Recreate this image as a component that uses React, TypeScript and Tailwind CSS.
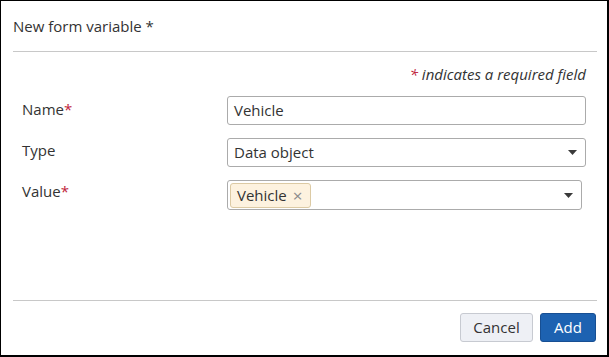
import React from "react";

// Triangulito del desplegable
const Caret = () => (
    <svg width="9" height="5" viewBox="0 0 9 5" className="shrink-0">
        <path d="M0 0 L9 0 L4.5 5 Z" fill="#3a3a3a" />
    </svg>
);

const Req = () => <span className="text-[#c0223b]">*</span>;

const App: React.FC = () => {
    return (
        <div className="w-[609px] h-[357px] bg-white border-black border-t border-l border-r-2 border-b-2 flex flex-col pl-3 pr-[10px] font-['Open_Sans',sans-serif] text-[15px] text-[#333333]">
            {/* Cabecera */}
            <div className="h-[51px] shrink-0 flex items-center border-b border-[#c8c8c8]">
                <span>New form variable *</span>
            </div>

            {/* Cuerpo del formulario */}
            <div className="flex-1 pt-3 pl-[9px] pr-[11px]">
                <p className="text-right italic leading-[20px]">
                    <Req /> indicates a required field
                </p>

                <div className="mt-3 flex flex-col gap-[13px]">
                    {/* Nombre */}
                    <div className="flex items-start">
                        <label className="w-[205px] pt-[3px] leading-[20px]">
                            Name<Req />
                        </label>
                        <div className="flex-1 h-[29px] border border-[#ababab] rounded-[3px] flex items-center px-[6px]">
                            Vehicle
                        </div>
                    </div>

                    {/* Tipo */}
                    <div className="flex items-start">
                        <label className="w-[205px] pt-[2px] leading-[20px]">Type</label>
                        <div className="flex-1 h-[29px] border border-[#ababab] rounded-[3px] flex items-center justify-between pl-[6px] pr-[8px]">
                            <span>Data object</span>
                            <Caret />
                        </div>
                    </div>

                    {/* Valor */}
                    <div className="flex items-start">
                        <label className="w-[205px] pt-[1px] leading-[20px]">
                            Value<Req />
                        </label>
                        <div className="flex-1 mr-[4px] h-[30px] border border-[#ababab] rounded-[3px] flex items-center justify-between pl-[2px] pr-[8px]">
                            <span className="h-[25px] flex items-center gap-[6px] pl-[6px] pr-[8px] bg-[#fdf2df] border border-[#dccaa4] rounded-[3px]">
                                Vehicle
                                <span className="text-[#8a8a8a] text-[17px] leading-none">×</span>
                            </span>
                            <Caret />
                        </div>
                    </div>
                </div>
            </div>

            {/* Pie con botones */}
            <div className="shrink-0 border-t border-[#c8c8c8] pt-3 pb-[13px] flex justify-end gap-[7px] pr-px">
                <button className="h-[29px] w-[73px] rounded-[3px] border border-[#c7cad1] bg-[#eef0f5] text-[#333333]">
                    Cancel
                </button>
                <button className="h-[29px] w-[56px] rounded-[3px] border border-[#174f93] bg-[#1d62b1] text-white">
                    Add
                </button>
            </div>
        </div>
    );
};

export default App;
